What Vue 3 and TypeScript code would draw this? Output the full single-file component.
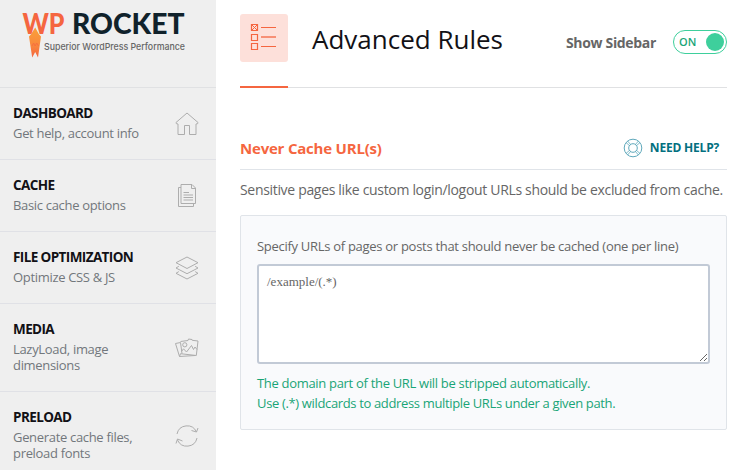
<script setup lang="ts">
import { ref } from 'vue'

interface MenuItem {
  id: string
  title: string
  description: string
}

const menu: MenuItem[] = [
  { id: 'dashboard', title: 'DASHBOARD', description: 'Get help, account info' },
  { id: 'cache', title: 'CACHE', description: 'Basic cache options' },
  { id: 'file', title: 'FILE OPTIMIZATION', description: 'Optimize CSS & JS' },
  { id: 'media', title: 'MEDIA', description: 'LazyLoad, image dimensions' },
  { id: 'preload', title: 'PRELOAD', description: 'Generate cache files, preload fonts' },
]

const rules = ref('/example/(.*)')
const showSidebar = ref(true)
</script>

<template>
  <div class="page">
    <aside class="sidebar">
      <header class="brand">
        <svg class="logo" width="216" height="87" viewBox="0 0 216 87">
          <defs>
            <linearGradient id="flame" x1="0" y1="0" x2="0" y2="1">
              <stop offset="0" stop-color="#f9a13a" />
              <stop offset="0.55" stop-color="#f98a3c" />
              <stop offset="1" stop-color="#f56640" />
            </linearGradient>
          </defs>
          <text class="logo-wp" x="22.5" y="34.300" textLength="42" lengthAdjust="spacingAndGlyphs">WP</text>
          <text class="logo-rocket" x="72" y="34.300" textLength="112.5" lengthAdjust="spacingAndGlyphs">ROCKET</text>
          <path d="M35.2 27.5L38.8 34L41 36.5L38 57.5L35.2 52L32.2 57.5L29 36.5L31.2 34Z" fill="url(#flame)" />
          <path d="M32 46l1.6-3 1.5 3 1.6-3 1.8 3" fill="none" stroke="#f6703f" stroke-width="1" />
          <text class="logo-tag" x="44" y="50" textLength="141" lengthAdjust="spacingAndGlyphs">Superior WordPress Performance</text>
        </svg>
      </header>
      <nav>
        <a v-for="item in menu" :key="item.id" class="item">
          <span class="item-text">
            <strong class="item-title">{{ item.title }}</strong>
            <span class="item-desc">{{ item.description }}</span>
          </span>
          <svg class="item-icon" width="26" height="26" viewBox="0 0 26 26">
            <path v-if="item.id === 'dashboard'" d="M13 2L2 11.5Q1.600 13 4 13V23.500H10.500V14.500H15.500V23.500H22V13Q24.400 13 24 11.500Z" />
            <g v-else-if="item.id === 'cache'">
              <path d="M7 1.500H18L21.500 5V20.500H7ZM17.500 1.500V5.500H21.500M7 4.500H4.500V23.500H19.500V20.500" />
              <path d="M9.500 9.500H15M9.500 12H19M9.500 14.500H19M9.500 17H19" />
            </g>
            <path v-else-if="item.id === 'file'" d="M13 2L24 7.700L13 13.500L2 7.700ZM4.800 11.300L2 13L13 18.700L24 13L21.200 11.300M4.800 16.600L2 18.300L13 24L24 18.300L21.200 16.600" />
            <g v-else-if="item.id === 'media'">
              <path d="M6.500 6.500L14 5.500L14.500 4L18 4.500L18.200 5.300L24 6L22.300 20.500L6.500 18.700L5.500 21.500L1.500 8.500L6.500 7.500L8 18.500M7.500 16.500L9.500 13.800L12.500 17L17.500 10.500L19.500 14.500L21 12L23 14.500" />
              <circle cx="10.800" cy="9.800" r="2.100" />
              <path d="M5.500 21.500L21 20.500" />
            </g>
            <path v-else d="M3 11A10.300 10.300 0 0 1 22.500 9M23 15A10.300 10.300 0 0 1 3.500 17M17.500 7.500L22.500 9L24 5M2 20.500L3.500 16L8.500 18" />
          </svg>
        </a>
      </nav>
    </aside>

    <main class="content">
      <header class="heading">
        <span class="heading-icon">
          <svg width="48" height="48" viewBox="0 0 48 48">
            <g fill="none" stroke="#f56640">
              <path d="M11.500 10.500h6v6h-6zM11.500 20.500h6v6h-6zM11.500 29.500h6v6h-6z" stroke-width="1.200" />
              <path d="M12 11l5 5M17 11l-5 5" />
              <path d="M21 13.500h15M21 32.500h15" />
              <path d="M21 23h15" stroke-width="2" opacity="0.650" />
            </g>
          </svg>
        </span>
        <h1>Advanced Rules</h1>
        <span class="toggle-label">Show Sidebar</span>
        <button class="toggle" type="button" @click="showSidebar = !showSidebar">
          <span>{{ showSidebar ? 'ON' : 'OFF' }}</span>
          <i class="knob"></i>
        </button>
      </header>

      <section>
        <div class="section-head">
          <h2>Never Cache URL(s)</h2>
          <a class="help">
            <svg width="20" height="20" viewBox="0 0 20 20" fill="none" stroke="#60a9bc">
              <circle cx="10" cy="10" r="8.800" />
              <circle cx="10" cy="10" r="4.300" />
              <path d="M3 4.500L6.300 7.500M4.500 3L7.500 6.300M17 4.500L13.700 7.500M15.500 3L12.500 6.300M3 15.500L6.300 12.500M4.500 17L7.500 13.700M17 15.500L13.700 12.500M15.500 17L12.500 13.700" stroke-width="0.800" />
            </svg>
            <span>NEED HELP?</span>
          </a>
        </div>
        <p class="intro">Sensitive pages like custom login/logout URLs should be excluded from cache.</p>
        <div class="panel">
          <label for="rules">Specify URLs of pages or posts that should never be cached (one per line)</label>
          <textarea id="rules" v-model="rules" spellcheck="false"></textarea>
          <p class="hint">The domain part of the URL will be stripped automatically.</p>
          <p class="hint wildcard">Use (.*) wildcards to address multiple URLs under a given path.</p>
        </div>
      </section>
    </main>
  </div>
</template>

<style>
body {
  margin: 0;
  background: #fff;
  overflow: hidden;
}
</style>

<style scoped>
.page {
  display: flex;
  width: 740px;
  height: 470px;
  overflow: hidden;
  font-family: "Open Sans", "Noto Sans", sans-serif;
  white-space: nowrap;
  color: #666;
}
.sidebar {
  flex: 0 0 216px;
  background: #efefef;
}
.brand {
  height: 87px;
  border-bottom: 1px solid #e0e1e3;
}
.logo {
  display: block;
}
.logo-wp,
.logo-rocket {
  font: 900 28px Lato, sans-serif;
  fill: #f56640;
}
.logo-rocket {
  fill: #10222b;
}
.logo-tag {
  font: 500 9.3px Inter, sans-serif;
  fill: #666;
}
.item {
  display: flex;
  align-items: center;
  justify-content: space-between;
  box-sizing: border-box;
  padding: 15px 16px 18px 13px;
  border-bottom: 1px solid #e0e1e6;
}
.item-text {
  display: flex;
  flex-direction: column;
  width: 140px;
}
.item-title {
  font-size: 13.5px;
  font-weight: 700;
  line-height: 20px;
  letter-spacing: -0.6px;
  color: #121116;
}
.item-desc {
  width: 130px;
  margin-top: 2px;
  font-size: 13px;
  line-height: 16px;
  letter-spacing: -0.32px;
  white-space: normal;
  color: #72777c;
}
.item-icon {
  position: relative;
  top: 2px;
  fill: none;
  stroke: #adadad;
  stroke-width: 1;
}
.content {
  flex: 0 0 487px;
  min-width: 0;
  padding-left: 24px;
}
.heading {
  display: flex;
  align-items: center;
  box-sizing: border-box;
  height: 88px;
  padding-bottom: 12px;
  background:
    linear-gradient(#f56640, #f56640) 0 100% / 48px 2px no-repeat,
    linear-gradient(#e0e1e3, #e0e1e3) 0 100% / 100% 1px no-repeat;
}
.heading-icon {
  width: 48px;
  height: 48px;
  border-radius: 3px;
  background: #fde0da;
}
h1 {
  flex: 1;
  margin: 2px 0 0 24px;
  font-size: 26px;
  font-weight: 500;
  line-height: 36px;
  color: #121116;
}
.toggle-label {
  margin: 9px 17px 0 0;
  font-size: 14px;
  font-weight: 700;
  letter-spacing: -0.33px;
}
.toggle {
  display: flex;
  align-items: center;
  justify-content: space-between;
  box-sizing: border-box;
  width: 54px;
  height: 24px;
  margin: 7px 0 0;
  padding: 0 2px 0 5px;
  border: 1px solid #3ecf9c;
  border-radius: 12px;
  background: #fff;
  font: 600 11px "Open Sans", sans-serif;
  color: #19a577;
}
.knob {
  width: 18px;
  height: 18px;
  border-radius: 50%;
  background: #3ecf9c;
}
.section-head {
  display: flex;
  align-items: center;
  justify-content: space-between;
  height: 43px;
  margin-top: 38px;
  border-bottom: 1px solid #e0e4e9;
}
h2 {
  margin: 0;
  font-size: 15px;
  font-weight: 700;
  line-height: 24px;
  letter-spacing: -0.21px;
  color: #f56640;
}
.help {
  display: flex;
  align-items: center;
  gap: 7px;
  margin-right: 8px;
  font-size: 12px;
  font-weight: 700;
  letter-spacing: -0.2px;
  color: #02707f;
}
.intro {
  margin: 9px 0 0;
  font-size: 14px;
  line-height: 22px;
  letter-spacing: -0.32px;
}
.panel {
  box-sizing: border-box;
  height: 215px;
  margin-top: 14px;
  padding: 20px 16px 0;
  border: 1px solid #e0e4e9;
  border-radius: 2px;
  background: #f9fafc;
}
label {
  display: block;
  font-size: 13px;
  line-height: 20px;
  letter-spacing: -0.29px;
}
textarea {
  display: block;
  box-sizing: border-box;
  width: 453px;
  height: 100px;
  margin: 8px 0 9px;
  padding: 8px;
  border: 2px solid #c2cad6;
  border-radius: 3px;
  outline: none;
  resize: vertical;
  background: #fff;
  font: 13px/16px "Liberation Serif", serif;
  color: #666;
}
.hint {
  margin: 0;
  font-size: 13px;
  line-height: 20px;
  letter-spacing: -0.31px;
  color: #19a577;
}
.wildcard {
  letter-spacing: -0.35px;
}
</style>
